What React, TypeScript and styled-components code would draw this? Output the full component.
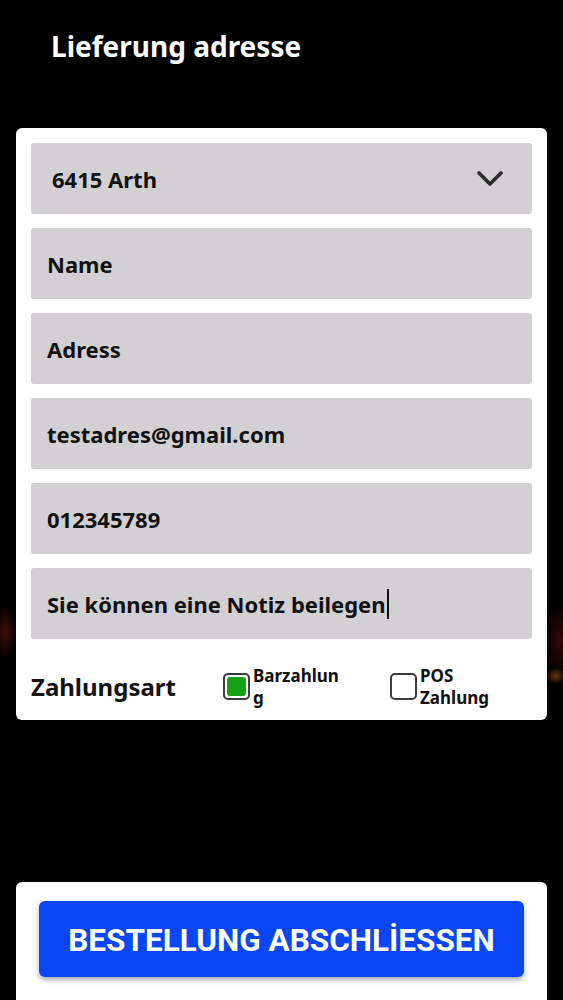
import React from 'react';
import styled, {createGlobalStyle} from 'styled-components';

const GlobalStyle = createGlobalStyle`
    html, body {
        margin: 0;
        padding: 0;
        background: #000;
    }
    * {
        box-sizing: border-box;
    }
`;

const fields = [
    {id: 'name', text: 'Name'},
    {id: 'address', text: 'Adress'},
    {id: 'mail', text: 'testadres@gmail.com'},
    {id: 'phone', text: '012345789'},
    {id: 'note', text: 'Sie können eine Notiz beilegen', focused: true},
];

const payments = [
    {id: 'cash', label: 'Barzahlung', checked: true},
    {id: 'pos', label: 'POS Zahlung', checked: false},
];

const App = () => {
    return (
        <Page>
            <GlobalStyle />
            <Title>Lieferung adresse</Title>
            <Card>
                <Select>
                    <SelectValue>6415 Arth</SelectValue>
                    <svg width='26' height='16' viewBox='0 0 26 16'>
                        <polyline
                            points='2,2 13,13 24,2'
                            fill='none'
                            stroke='#2b2b2b'
                            strokeWidth='3.6'
                            strokeLinecap='round'
                            strokeLinejoin='round'
                        />
                    </svg>
                </Select>
                {fields.map(field => (
                    <Field key={field.id}>
                        {field.text}
                        {field.focused && <Caret />}
                    </Field>
                ))}
                <PaymentRow>
                    <PaymentTitle>Zahlungsart</PaymentTitle>
                    {payments.map(p => (
                        <Option key={p.id}>
                            <CheckBox checked={p.checked} />
                            <OptionLabel>{p.label}</OptionLabel>
                        </Option>
                    ))}
                </PaymentRow>
            </Card>
            <Footer>
                <SubmitButton>BESTELLUNG ABSCHLİESSEN</SubmitButton>
            </Footer>
        </Page>
    );
};

export default App;

const Page = styled.div`
    height: 1000px;
    display: flex;
    flex-direction: column;
    font-family: 'Noto Sans', 'Open Sans', sans-serif;
    background:
        radial-gradient(ellipse 12px 26px at 5px 632px, rgba(140, 18, 10, 0.45), transparent),
        radial-gradient(ellipse 14px 36px at 560px 640px, rgba(110, 18, 10, 0.45), transparent),
        radial-gradient(ellipse 10px 8px at 556px 676px, rgba(200, 100, 30, 0.5), transparent),
        #020202;
    overflow: hidden;
`;

const Title = styled.h1`
    margin: 0 0 63px 51px;
    padding-top: 27px;
    font-size: 28px;
    line-height: 38px;
    font-weight: 700;
    color: #fff;
`;

const Card = styled.div`
    margin: 0 16px;
    background: #fefefe;
    border-radius: 6px;
    padding: 15px 15px 0;
    display: flex;
    flex-direction: column;
    gap: 14px;
`;

const Field = styled.div`
    height: 71px;
    display: flex;
    align-items: center;
    padding-left: 16px;
    background: #d2d0d3;
    border-radius: 3px;
    font-size: 22px;
    font-weight: 700;
    color: #111;
`;

const Select = styled(Field)`
    justify-content: space-between;
    padding: 0 29px 0 21px;
`;

const SelectValue = styled.span``;

const Caret = styled.span`
    display: inline-block;
    width: 2px;
    height: 30px;
    margin-left: 1px;
    background: #111;
`;

const PaymentRow = styled.div`
    height: 67px;
    display: flex;
    align-items: center;
`;

const PaymentTitle = styled.div`
    flex: none;
    width: 192px;
    font-size: 24px;
    font-weight: 700;
    color: #111;
`;

const Option = styled.div`
    flex: none;
    width: 167px;
    display: flex;
    align-items: center;
    gap: 3px;
    &:last-child {
        flex: 1;
        width: auto;
    }
`;

const CheckBox = styled.span<{checked: boolean}>`
    flex: none;
    width: 27px;
    height: 27px;
    border: 2px solid #3c3c3c;
    border-radius: 5px;
    padding: 2px;
    background: #fff;
    &::after {
        content: '';
        display: ${props => (props.checked ? 'block' : 'none')};
        width: 100%;
        height: 100%;
        border-radius: 3px;
        background: #16a016;
    }
`;

const OptionLabel = styled.span`
    width: 88px;
    font-size: 17px;
    line-height: 22px;
    font-weight: 700;
    color: #111;
    overflow-wrap: anywhere;
`;

const Footer = styled.div`
    margin: auto 16px 0;
    height: 118px;
    background: #fefefe;
    border-radius: 6px 6px 0 0;
    padding: 19px 23px 0;
`;

const SubmitButton = styled.button`
    width: 100%;
    height: 76px;
    padding-top: 4px;
    border: none;
    border-radius: 6px;
    background: #0b46f4;
    box-shadow: 0 3px 5px rgba(10, 20, 60, 0.35);
    color: #fff;
    font-family: Roboto, 'Liberation Sans', sans-serif;
    font-size: 31.5px;
    font-weight: 700;
    cursor: pointer;
`;
